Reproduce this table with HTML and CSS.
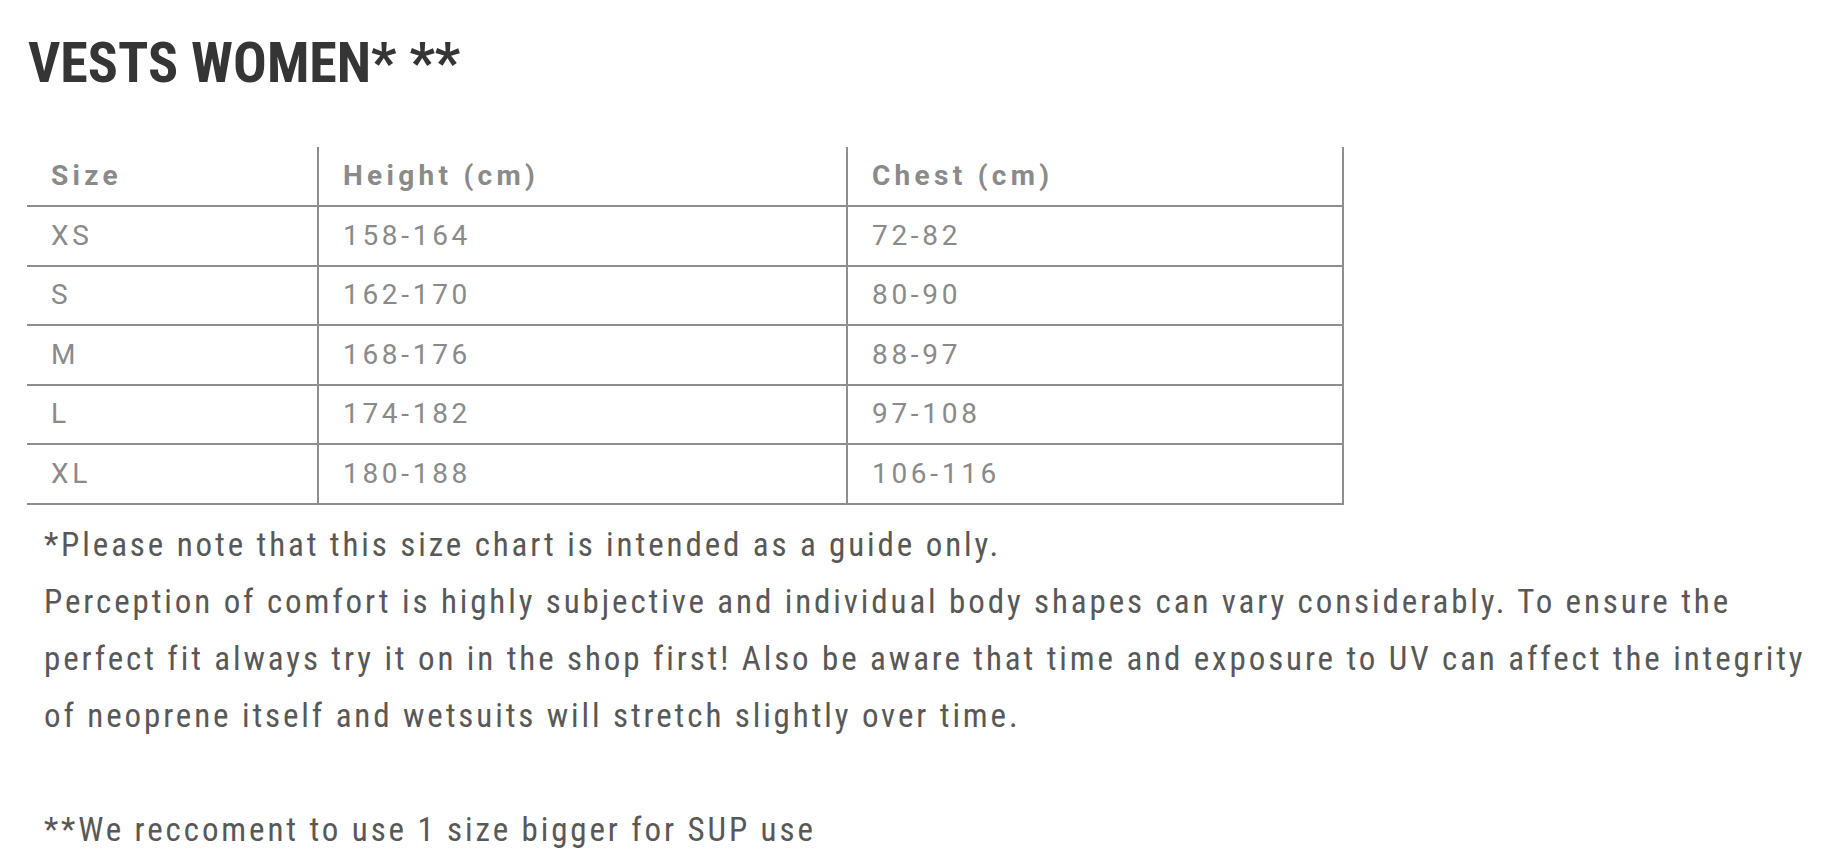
FILE: index.html
```html
<!DOCTYPE html>
<html lang="en">
<head>
<meta charset="utf-8">
<title>Vests Women size chart</title>
<link rel="stylesheet" href="styles.css">
</head>
<body>
<main class="page">
  <h1 class="title">VESTS WOMEN* **</h1>
  <table class="chart">
    <thead>
      <tr><th class="c1">Size</th><th class="c2">Height (cm)</th><th class="c3">Chest (cm)</th></tr>
    </thead>
    <tbody>
      <tr><td>XS</td><td>158-164</td><td>72-82</td></tr>
      <tr><td>S</td><td>162-170</td><td>80-90</td></tr>
      <tr><td>M</td><td>168-176</td><td>88-97</td></tr>
      <tr><td>L</td><td>174-182</td><td>97-108</td></tr>
      <tr><td>XL</td><td>180-188</td><td>106-116</td></tr>
    </tbody>
  </table>
  <div class="notes">
    <p>*Please note that this size chart is intended as a guide only.</p>
    <p>Perception of comfort is highly subjective and individual body shapes can vary considerably. To ensure the<br>perfect fit always try it on in the shop first! Also be aware that time and exposure to UV can affect the integrity<br>of neoprene itself and wetsuits will stretch slightly over time.</p>
    <p class="sup">**We reccoment to use 1 size bigger for SUP use</p>
  </div>
</main>
</body>
</html>
```
FILE: styles.css
```css
html, body {
  margin: 0;
  padding: 0;
  background: #ffffff;
}

.page {
  padding: 31px 0 0 27px;
  font-family: "Roboto Condensed", "Roboto", "Liberation Sans", sans-serif;
}

.title {
  margin: 0 0 0 1px;
  font-size: 56px;
  line-height: 64px;
  font-weight: 700;
  letter-spacing: 0;
  color: #353535;
}

.chart {
  margin-top: 52px;
  width: 1317px;
  border-collapse: separate;
  border-spacing: 0;
  table-layout: fixed;
  font-family: "Roboto", "Liberation Sans", sans-serif;
  font-size: 28px;
  color: #8a8a8a;
}

.chart th,
.chart td {
  height: 57.5px;
  padding: 0 0 0 24px;
  text-align: left;
  vertical-align: middle;
  border-bottom: 2px solid #8e8e8e;
  border-right: 2px solid #8e8e8e;
  letter-spacing: 3.7px;
  font-weight: 400;
  line-height: 1;
}

.chart th {
  height: 58px;
  font-weight: 700;
  letter-spacing: 4.3px;
}

.chart .c1 { width: 266px; }
.chart .c2 { width: 503px; }
.chart .c3 { width: 470px; }

.notes {
  margin: 11px 0 0 17px;
  font-size: 33px;
  line-height: 57px;
  letter-spacing: 2.9px;
  color: #585858;
}

.notes p {
  margin: 0;
}

.notes .sup {
  margin-top: 57px;
}
```
